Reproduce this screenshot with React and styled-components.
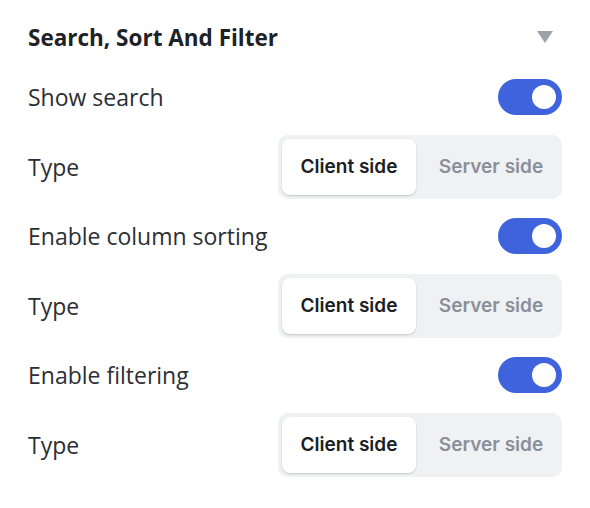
import styled, { createGlobalStyle } from "styled-components"

const Global = createGlobalStyle`
    html, body {
        margin: 0;
        background: #ffffff;
    }
`

const Panel = styled.div`
    width: 590px;
    box-sizing: border-box;
    padding: 18px 28px 30px;
    display: flex;
    flex-direction: column;
    font-family: "Open Sans", "Noto Sans", sans-serif;
`

const Header = styled.div`
    display: flex;
    align-items: center;
    justify-content: space-between;
    height: 38px;
    margin-bottom: 23px;

    h2 {
        margin: 0;
        font-size: 22.5px;
        font-weight: 700;
        color: #1e2126;
    }
`

const Caret = styled.span`
    width: 0;
    height: 0;
    margin-right: 9px;
    border-left: 8px solid transparent;
    border-right: 8px solid transparent;
    border-top: 12px solid #9da2a8;
`

const List = styled.div`
    display: flex;
    flex-direction: column;
    gap: 19.5px;
`

const Row = styled.div`
    display: flex;
    align-items: center;
    justify-content: space-between;
    height: ${p => (p.$tall ? "64px" : "36px")};
`

const Label = styled.span`
    font-size: 23px;
    color: #2b2f34;
`

const Toggle = styled.span`
    width: 64px;
    height: 36px;
    box-sizing: border-box;
    padding: 6px;
    border-radius: 18px;
    background: ${p => (p.$on ? "#3e63dd" : "#d4d7dc")};
    display: flex;
    justify-content: ${p => (p.$on ? "flex-end" : "flex-start")};

    &::after {
        content: "";
        width: 24px;
        height: 24px;
        border-radius: 50%;
        background: #ffffff;
    }
`

const Segmented = styled.div`
    width: 284px;
    height: 64px;
    box-sizing: border-box;
    padding: 4px;
    border-radius: 10px;
    background: #f0f1f3;
    display: flex;
    gap: 2px;
`

const Segment = styled.span`
    flex: ${p => (p.$active ? "0 0 134px" : "1")};
    display: flex;
    align-items: center;
    justify-content: center;
    padding-left: ${p => (p.$active ? "0" : "6px")};
    border-radius: 8px;
    font-family: Inter, sans-serif;
    font-size: 19px;
    font-weight: 600;
    color: ${p => (p.$active ? "#1b1e22" : "#8a9099")};
    background: ${p => (p.$active ? "#ffffff" : "transparent")};
    box-shadow: ${p => (p.$active ? "0 1px 2px rgba(0, 0, 0, 0.18)" : "none")};
`

const settings = [
    "Show search",
    "Enable column sorting",
    "Enable filtering",
]

const App = () => {
    return (
        <Panel>
            <Global />
            <Header>
                <h2>Search, Sort And Filter</h2>
                <Caret />
            </Header>
            <List>
                {settings.map(name => (
                    <>
                        <Row key={name}>
                            <Label>{name}</Label>
                            <Toggle $on />
                        </Row>
                        <Row key={name + "-type"} $tall>
                            <Label>Type</Label>
                            <Segmented>
                                <Segment $active>Client side</Segment>
                                <Segment>Server side</Segment>
                            </Segmented>
                        </Row>
                    </>
                ))}
            </List>
        </Panel>
    )
}

export default App
